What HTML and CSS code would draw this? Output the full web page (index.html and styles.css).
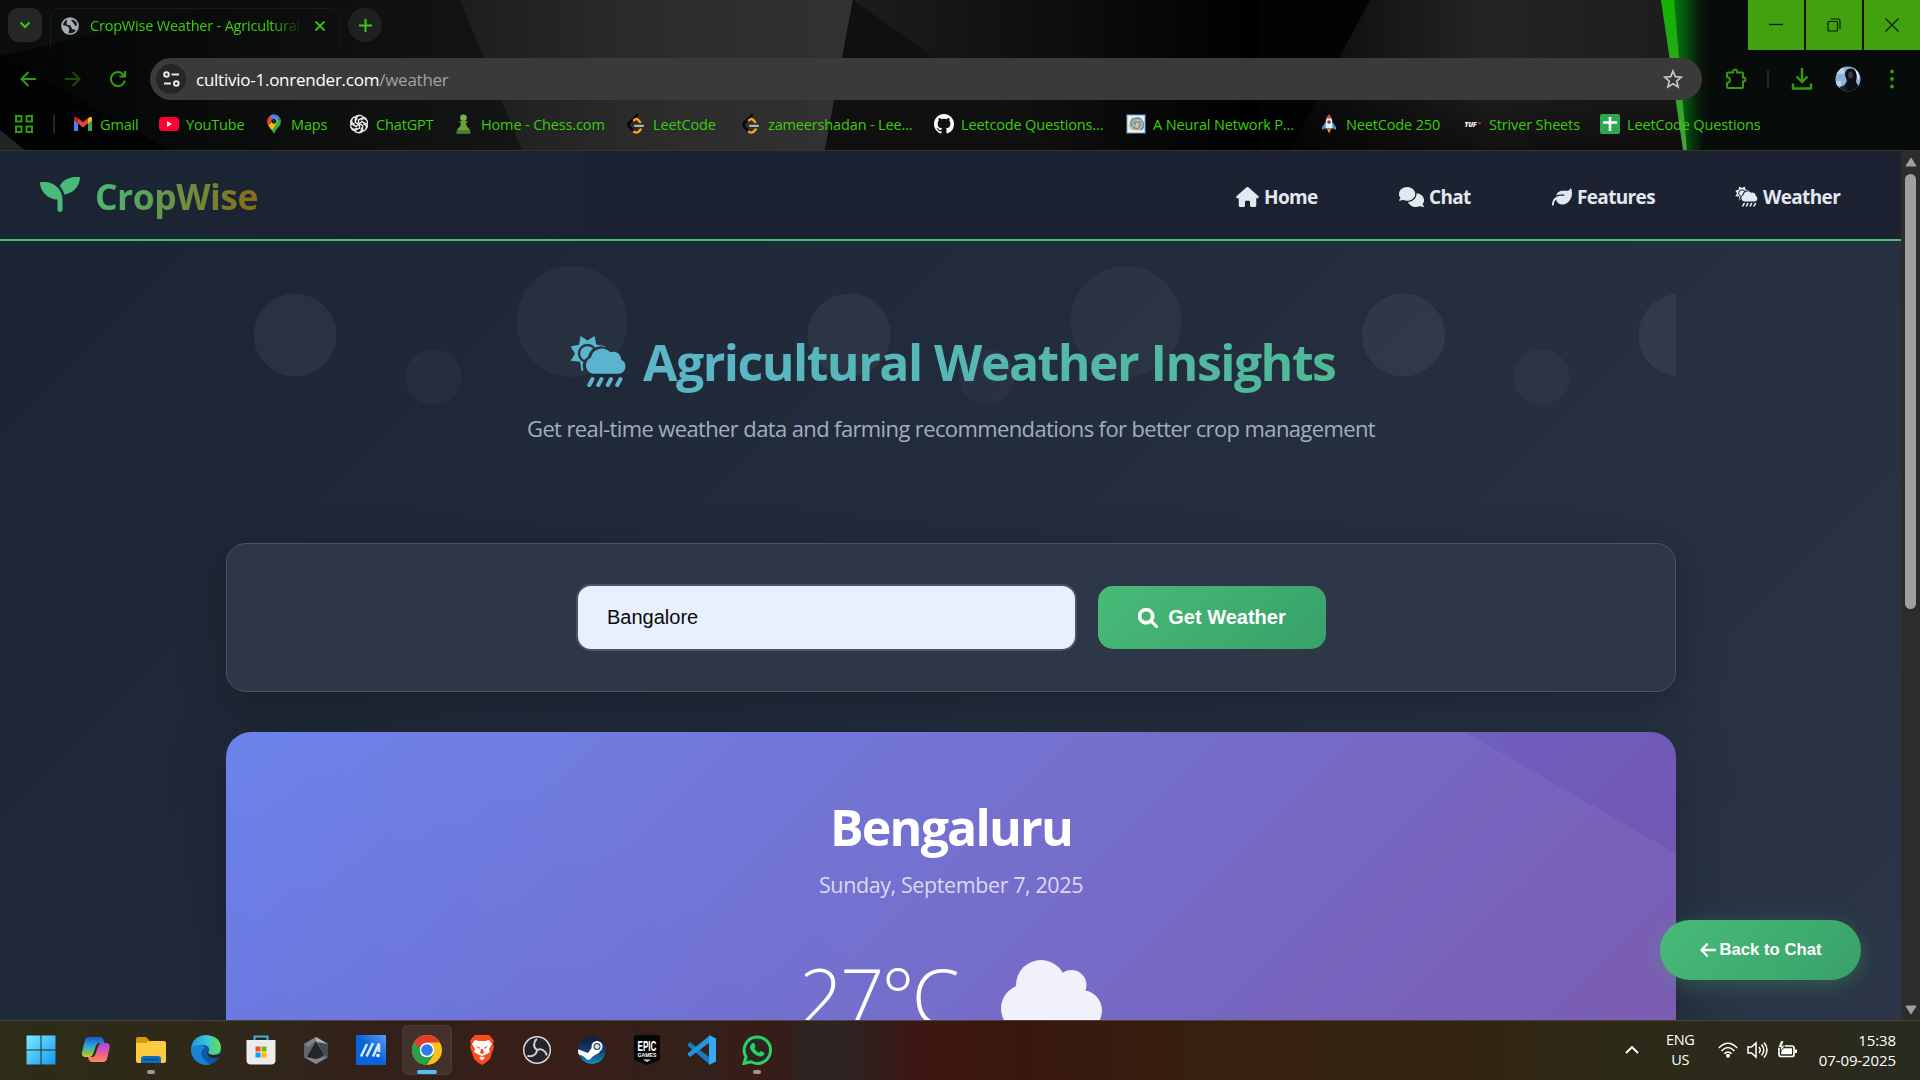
FILE: index.html
```html
<!DOCTYPE html>
<html lang="en">
<head>
<meta charset="utf-8">
<title>CropWise Weather</title>
<link rel="stylesheet" href="styles.css">
</head>
<body>
<svg class="defs" width="0" height="0">
  <defs>
    <mask id="sunCut" maskUnits="userSpaceOnUse" x="0" y="0" width="57" height="51">
      <rect width="57" height="51" fill="#fff"/>
      <circle cx="17.5" cy="17.5" r="8.500" fill="none" stroke="#000" stroke-width="2.400"/>
      <path d="M23 39.500a9.500 9.500 0 0 1-4-18a12 12 0 0 1 20-7a9 9 0 0 1 12 8l6 10v7z" fill="#000" stroke="#000" stroke-width="2"/>
    </mask>
    <symbol id="csr" viewBox="0 0 57 51">
      <path mask="url(#sunCut)" d="M10.500 0l7 4.500l7-4.500l1.800 8.500l9 1.800l-4.500 7.200l4.500 7.200l-9.300.800l-1 10l-7-5l-6.500 5l-1.400-9.700l-9.500-1l4.500-7.100l-4.500-7.200l8.500-1.800z"/>
      <path d="M24.500 37.800a8.500 8.500 0 0 1-3.500-16.300a11 11 0 0 1 19-5.200a8 8 0 0 1 11.200 7.500a7.400 7.400 0 0 1-2 14z"/>
      <path d="M22.500 43l-3.200 6M31.500 43l-3.200 6M41 43l-3.200 6M50.500 43l-3.200 6" stroke="currentColor" stroke-width="4" stroke-linecap="round"/>
    </symbol>
    <symbol id="leetcode" viewBox="0 0 20 20">
      <path d="M11 1L3 9.300q-1.200 1.500 0 3l3.500 4" fill="none" stroke="#050505" stroke-width="2.400" stroke-linecap="round"/>
      <path d="M8 6.300q2-2.300 4-.6l2 2.300M8 17.800q2.500 1.600 4.500 0l2.200-2.400" fill="none" stroke="#ffa116" stroke-width="2.400" stroke-linecap="round"/>
      <path d="M9 11.800h8" stroke="#b3b3b3" stroke-width="2.200" stroke-linecap="round"/>
    </symbol>
  </defs>
</svg>

<div class="screen">
  <header class="chrome">
    <svg class="wallpaper" viewBox="0 0 1920 150" preserveAspectRatio="none">
      <defs>
        <linearGradient id="g1" x1="0" x2="1"><stop offset="0" stop-color="#1c1d1d"/><stop offset=".45" stop-color="#2b2b2b"/><stop offset="1" stop-color="#323232"/></linearGradient>
        <linearGradient id="g2" x1="0" x2="1"><stop offset="0" stop-color="#1c1c1c"/><stop offset="1" stop-color="#000"/></linearGradient>
        <linearGradient id="g3" x1="0" x2="1"><stop offset="0" stop-color="#0a0a0a"/><stop offset=".5" stop-color="#242424"/><stop offset="1" stop-color="#1c1c1c"/></linearGradient>
        <linearGradient id="g4" x1="0" x2="1"><stop offset="0" stop-color="#067d0c"/><stop offset=".4" stop-color="#044a0c"/><stop offset="1" stop-color="#060b09" stop-opacity="0"/></linearGradient>
        <linearGradient id="g5" x1="0" x2="1"><stop offset="0" stop-color="#030404"/><stop offset="1" stop-color="#141616"/></linearGradient>
        <linearGradient id="g6" x1="0" y1="0" x2="0" y2="1"><stop offset="0" stop-color="#13b300"/><stop offset=".6" stop-color="#2fa424"/><stop offset="1" stop-color="#48a040"/></linearGradient>
        <linearGradient id="g7" x1="0" y1="0" x2="0" y2="1"><stop offset="0" stop-color="#000" stop-opacity="0"/><stop offset="1" stop-color="#000" stop-opacity=".55"/></linearGradient>
      </defs>
      <rect width="1920" height="150" fill="#020303"/>
      <path d="M245 0H470L530 150H170L0 55z" fill="url(#g5)"/>
      <path d="M0 0H245L0 56z" fill="#0c0e0e"/>
      <path d="M0 130L25 150H0z" fill="#222424"/>
      <path d="M460 0H853L825 150H522z" fill="url(#g1)"/>
      <path d="M853 0L825 150H1062z" fill="#101010"/>
      <path d="M853 0L1062 150H1260V0z" fill="url(#g2)"/>
      <path d="M1370 0H1665L1685 150H1290z" fill="url(#g3)"/>
      <path d="M1290 60H1685V150H1290z" fill="url(#g7)"/>
      <path d="M1670 0H1920V150H1690z" fill="#070b09"/>
      <path d="M1672 0H1708L1712 100L1700 150H1687z" fill="url(#g4)"/>
      <path d="M1661 0H1674L1687 150H1683z" fill="url(#g6)"/>
    </svg>

    <div class="tabrow">
      <span class="tabsearch"><svg width="12" height="8" viewBox="0 0 12 8"><path d="M1.500 1.500L6 6l4.500-4.500" fill="none" stroke="#3ecc0e" stroke-width="2"/></svg></span>
      <div class="tab">
        <svg width="18" height="20" viewBox="0 0 18 18"><circle cx="9" cy="9" r="8.800" fill="#a5adb6"/><path d="M6 2.500q-3.500 2-4 5.500l5 1.500l1.500 2.500l-1 4q5 1 7.500-3l-4-1-1.500-3.500l-4-1z M10 3l2 2.500l2.500 3.500l1.500-.5q0-4-4-5.700z" fill="#151818"/></svg>
        <span class="tabtitle">CropWise Weather - Agricultural</span>
        <svg width="10" height="10" viewBox="0 0 10 10"><path d="M.5.5l9 9M9.500.5l-9 9" stroke="#3ecc0e" stroke-width="1.800"/></svg>
      </div>
      <span class="newtab"><svg width="13" height="13" viewBox="0 0 13 13"><path d="M6.500 0v13M0 6.500h13" stroke="#3ecc0e" stroke-width="2"/></svg></span>
      <div class="wincontrols">
        <span><svg width="14" height="14"><path d="M0 6.500h14" stroke="#0c1c04" stroke-width="1.300"/></svg></span>
        <span><svg width="14" height="14" viewBox="0 0 14 14" fill="none" stroke="#0c1c04" stroke-width="1.200"><rect x="1" y="3.500" width="9.500" height="9.500" rx="1"/><path d="M3.500 1h7q2.500 0 2.500 2.500v7.500"/></svg></span>
        <span><svg width="14" height="14"><path d="M.5.5l13 13M13.500.5l-13 13" stroke="#0c1c04" stroke-width="1.200"/></svg></span>
      </div>
    </div>

    <div class="urlrow">
      <svg class="nav" width="16" height="16" viewBox="0 0 16 16" fill="none" stroke="#349a10" stroke-width="2"><path d="M16 8H1.500M8.500 1L1.500 8l7 7"/></svg>
      <svg class="nav" width="16" height="16" viewBox="0 0 16 16" fill="none" stroke="#1d4a10" stroke-width="2"><path d="M0 8h14.500M7.500 1l7 7l-7 7"/></svg>
      <svg class="nav" width="16" height="16" viewBox="0 0 16 16" fill="none" stroke="#349a10" stroke-width="2"><path d="M14.800 9.500A7 7 0 1 1 13 3.200l1.500 1.500M15 0v5.500H9.500"/></svg>
      <div class="omnibox">
        <span class="siteinfo"><svg width="17" height="16" viewBox="0 0 17 16" fill="none" stroke="#e8e8e8" stroke-width="2"><circle cx="3.500" cy="3.500" r="2.300"/><path d="M8.500 3.500H16M1 12.500h7"/><circle cx="13.300" cy="12.500" r="2.300"/></svg></span>
        <span class="url">cultivio-1.onrender.com<i>/weather</i></span>
        <svg class="star" width="20" height="20" viewBox="0 0 20 20"><path d="M10 2l2.300 5.600 6 .5-4.600 3.900 1.400 5.900-5.100-3.200-5.100 3.200 1.400-5.900L1.700 8.100l6-.5z" fill="none" stroke="#c4c4c4" stroke-width="1.700"/></svg>
      </div>
      <svg class="ext" width="22" height="22" viewBox="0 0 22 22"><path d="M3 4.500h5q-.3-3 2-3t2 3h5q1 0 1 1v4q2.500 0 2.500 2t-2.500 2v5q0 1.500-1 1.500H3q-1 0-1-1.500v-3.500q3-.5 3-3T2 9V5.500q0-1 1-1z" fill="none" stroke="#349a10" stroke-width="2"/></svg>
      <span class="sep"></span>
      <svg class="dl" width="22" height="22" viewBox="0 0 22 22"><path d="M11 0v13.500M5.500 8.500l5.500 5.500L16.500 8.500M2 15.500V20.500h18v-5" fill="none" stroke="#349a10" stroke-width="2.400"/></svg>
      <svg class="avatar" width="26" height="26" viewBox="0 0 26 26"><clipPath id="av"><circle cx="13" cy="13" r="12.500"/></clipPath><g clip-path="url(#av)"><rect width="26" height="26" fill="#8fb2d4"/><path d="M0 0h9v8H0zM0 15h6v5H0z" fill="#b9d2e8"/><path d="M12 26L9 20l3-5-2-6q0-6 5-6.500t7 5.500l-1 8 3 5v5z" fill="#0c0f16"/><path d="M20 3q5 5 4 12l-2-5z" fill="#e9eef2"/><path d="M3 26l2-5 5-2 3 7z" fill="#1a2230"/><ellipse cx="15.500" cy="9" rx="2.500" ry="3.500" fill="#3d3a42"/></g></svg>
      <svg class="dots" width="4" height="20" viewBox="0 0 4 20" fill="#349a10"><circle cx="2" cy="2.500" r="1.900"/><circle cx="2" cy="10" r="1.900"/><circle cx="2" cy="17.500" r="1.900"/></svg>
    </div>

    <div class="bookmarks">
      <svg class="apps" width="18" height="18" viewBox="0 0 18 18" fill="none" stroke="#349a10" stroke-width="2"><path d="M1 1h5.500v5.500H1zM11.500 1H17v5.500h-5.500zM1 11.500h5.500V17H1zM11.500 11.500H17V17h-5.500z"/></svg>
      <span class="sep"></span>
      <div class="marks">
        <span><svg viewBox="0 0 20 20"><path d="M1 4.500v12.500h4V9z" fill="#4285f4"/><path d="M19 4.500v12.500h-4V9z" fill="#34a853"/><path d="M1 6V5q0-3 2.500-1.800L5 4.300V9.500L1 6.500z" fill="#c5221f"/><path d="M5 4.300l5 3.900 5-3.900v5.200l-5 4-5-4z" fill="#ea4335"/><path d="M19 6V5q0-3-2.500-1.800L15 4.300V9.500l4-3z" fill="#fbbc04"/></svg><b>Gmail</b></span>
        <span><svg viewBox="0 0 20 20"><rect y="3" width="20" height="14" rx="3.500" fill="#ff0033"/><path d="M8 7v6l5-3z" fill="#fff"/></svg><b>YouTube</b></span>
        <span><svg viewBox="0 0 20 20"><path d="M10 .5A7 7 0 0 0 4.500 3.500L8 6.500z" fill="#1a73e8"/><path d="M4.700 3.200Q3 5 3 7.500q0 2 1.300 4L12.500 1q-1-.5-2.500-.5-3.500 0-5.300 2.700z" fill="#ea4335"/><path d="M6 1.800Q8 .5 10 .5q4 0 6 3.500L10 10 8 5z" fill="#4285f4"/><path d="M4.300 11.500q2.200 3 4 5.500L15 7 11 4z" fill="#fbbc04"/><path d="M16 4q1 1.500 1 3.500 0 3-3 6-2.700 3-3.500 5.500-.5 1-1 0L8 16.500z" fill="#34a853"/><circle cx="10" cy="7.300" r="2.500" fill="#10233f"/></svg><b>Maps</b></span>
        <span><svg viewBox="0 0 20 20" fill="none" stroke="#e8e8e8" stroke-width="1.400"><g id="petal"><path d="M7.500 6.500V3.800q1-2.600 3.800-2.400 2 .2 3 2L9.500 6v5"/><path d="M14.300 3.400q2.700.2 3.300 3"/></g><use href="#petal" transform="rotate(60 10 10)"/><use href="#petal" transform="rotate(120 10 10)"/><use href="#petal" transform="rotate(180 10 10)"/><use href="#petal" transform="rotate(240 10 10)"/><use href="#petal" transform="rotate(300 10 10)"/></svg><b>ChatGPT</b></span>
        <span><svg viewBox="0 0 20 20"><circle cx="9.500" cy="3.800" r="3.300" fill="#7fb43f"/><path d="M5.500 7.500q4-1.700 8 0v1.200h-1.700q.2 3.800 3.500 6.300 1.300 1.500 1 4.500H2.700q-.3-3 1-4.500Q7 12.500 7.200 8.700H5.500z" fill="#6aa338"/><path d="M3 16h13v3.500H2.700z" fill="#4c8132"/></svg><b>Home - Chess.com</b></span>
        <span><svg><use href="#leetcode"/></svg><b>LeetCode</b></span>
        <span><svg><use href="#leetcode"/></svg><b>zameershadan - Lee...</b></span>
        <span><svg viewBox="0 0 16 16" fill="#fff"><path d="M8 0C3.580 0 0 3.580 0 8c0 3.540 2.290 6.530 5.470 7.590.4.070.55-.17.55-.38 0-.19-.01-.82-.01-1.490-2.010.37-2.530-.49-2.690-.94-.09-.23-.48-.94-.82-1.130-.28-.15-.68-.52-.01-.53.63-.01 1.080.58 1.230.82.72 1.210 1.870.87 2.330.66.07-.52.28-.87.51-1.070-1.780-.2-3.640-.89-3.640-3.950 0-.87.31-1.590.82-2.150-.08-.2-.36-1.020.08-2.120 0 0 .67-.21 2.200.82.64-.18 1.320-.27 2-.27s1.360.09 2 .27c1.530-1.040 2.200-.82 2.200-.82.44 1.100.16 1.920.08 2.120.51.56.82 1.270.82 2.150 0 3.070-1.870 3.750-3.650 3.950.29.25.54.73.54 1.480 0 1.070-.01 1.930-.01 2.200 0 .21.15.46.55.38A8.010 8.010 0 0 0 16 8c0-4.420-3.580-8-8-8z"/></svg><b>Leetcode Questions...</b></span>
        <span><svg viewBox="0 0 20 20"><rect x=".5" y=".5" width="19" height="19" fill="#e8f1f8" stroke="#295873" stroke-width="1.500"/><path d="M10 10q1.500-2 2.500 0t-2.500 2.500T7 10t3.500-4.500T15.500 10 10 15.500 4 10t3-6.500" fill="none" stroke="#e9a04e" stroke-width="1.500"/><path d="M10 10q-1.500 1.500-1.500-.5t3-2 2.500 4-5 2.500-3.500-5.500T11 4t6 5-2.500 7" fill="none" stroke="#4a93cf" stroke-width="1.500"/></svg><b>A Neural Network P...</b></span>
        <span><svg viewBox="0 0 20 20"><path d="M6 9l-3 4v3l4-2zM14 9l3 4v3l-4-2z" fill="#3f8fd6"/><path d="M10 .5Q5.500 5 6.500 14.500h7Q14.500 5 10 .5z" fill="#e9edf2"/><path d="M10 .5Q8 2 7.300 4.500h5.400Q12 2 10 .5z" fill="#e0452c"/><circle cx="10" cy="8" r="1.800" fill="#35536e"/><path d="M8 15h4l-2 4.500z" fill="#ff8a1c"/></svg><b>NeetCode 250</b></span>
        <span><svg class="tuf" viewBox="0 0 20 20"><text x="2.500" y="12.500">TUF</text><path d="M16.500 8.500h2.200v1.600h-2.200z" fill="#d0522c"/></svg><b>Striver Sheets</b></span>
        <span><svg viewBox="0 0 20 20"><rect width="20" height="20" rx="2" fill="#2fa650"/><path d="M10 3v14M3 8.500h14" stroke="#fff" stroke-width="2.600"/></svg><b>LeetCode Questions</b></span>
      </div>
    </div>
  </header>

  <div class="viewport">
    <div class="page">
      <nav class="navbar">
        <div class="brand">
          <svg width="40" height="35" viewBox="0 32 512 448" fill="#48bb78"><path d="M64 96H0c0 123.700 100.300 224 224 224v128c0 17.700 14.300 32 32 32s32-14.300 32-32V320C288 196.300 187.700 96 64 96zm384-64c-84.200 0-157.400 46.300-195.600 115.200c27.700 30.200 48.200 66.900 59 107.600C424 243.100 512 147.900 512 32H448z"/></svg>
          <span>CropWise</span>
        </div>
        <div class="links">
          <a><svg width="23" height="20" viewBox="0 0 576 512"><path d="M575.800 255.500c0 18-15 32.100-32 32.100h-32l.7 160.200c0 2.700-.2 5.400-.5 8.100V472c0 22.100-17.900 40-40 40H456 392c-22.100 0-40-17.900-40-40V384c0-17.700-14.300-32-32-32H256c-17.700 0-32 14.300-32 32v88c0 22.100-17.900 40-40 40H104c-22.100 0-40-17.900-40-40V287.600H32c-18 0-32-14-32-32.100c0-9 3-17 10-24L266.400 8c7-7 15-8 22-8s15 2 21 7L564.800 231.500c8 7 12 15 11 24z"/></svg><span>Home</span></a>
          <a><svg width="25" height="20" viewBox="0 0 640 512"><path d="M208 352c114.900 0 208-78.800 208-176S322.900 0 208 0S0 78.800 0 176c0 38.600 14.700 74.300 39.600 103.400c-3.500 9.400-8.700 17.700-14.200 24.700c-4.800 6.200-9.700 11-13.300 14.300c-1.800 1.600-3.300 2.900-4.300 3.700C1 327.200-1.400 334.400.8 340.900S9.100 352 16 352c21.800 0 43.800-5.600 62.100-12.500c9.200-3.500 17.800-7.400 25.200-11.400C134.100 343.300 169.800 352 208 352zM448 176c0 112.300-99.100 196.900-216.500 207C255.800 457.400 336.400 512 432 512c38.200 0 73.900-8.700 104.700-23.900c7.500 4 16 7.900 25.200 11.400c18.300 6.900 40.300 12.500 62.100 12.500c6.900 0 13.100-4.500 15.200-11.100c2.100-6.600-.2-13.800-5.800-17.900c-1-.8-2.500-2-4.300-3.700c-3.600-3.300-8.500-8.100-13.300-14.300c-5.500-7-10.700-15.400-14.200-24.700c24.900-29 39.600-64.700 39.600-103.400c0-92.800-84.900-168.900-192.600-175.500c.4 5.100.6 10.300.6 15.500z"/></svg><span>Chat</span></a>
          <a><svg width="20" height="20" viewBox="0 0 512 512"><path d="M272 96c-78.600 0-145.100 51.500-167.700 122.500c33.600-17 71.500-26.500 111.700-26.500h88c8.800 0 16 7.200 16 16s-7.200 16-16 16H216c-16.600 0-32.700 1.900-48.200 5.400c-25.900 5.900-50 16.400-71.400 30.700C38.300 298.800 0 364.900 0 440v16c0 13.300 10.700 24 24 24s24-10.700 24-24V440c0-48.700 20.700-92.500 53.800-123.200C121.600 392.300 190.300 448 272 448h1c132.100-.7 239-130.900 239-291.400c0-42.600-7.500-83.100-21.100-119.600c-2.600-6.900-12.700-6.600-16.200-.1C455.900 72.100 418.700 96 376 96z"/></svg><span>Features</span></a>
          <a><svg width="23" height="21"><use href="#csr"/></svg><span>Weather</span></a>
        </div>
      </nav>

      <main class="content">
        <section class="hero">
          <svg class="bubbles" width="1450" height="200">
            <g fill="#fff"><circle cx="69" cy="94" r="41.500" fill-opacity=".055"/><circle cx="207.500" cy="136" r="28" fill-opacity=".03"/><circle cx="346" cy="80.500" r="55.500" fill-opacity=".04"/><circle cx="623" cy="94" r="41.500" fill-opacity=".055"/><circle cx="761" cy="136" r="28" fill-opacity=".03"/><circle cx="900" cy="80.500" r="55.500" fill-opacity=".04"/><circle cx="1177.500" cy="94" r="41.500" fill-opacity=".055"/><circle cx="1315.500" cy="136" r="28" fill-opacity=".03"/><circle cx="1454" cy="94" r="41.500" fill-opacity=".055"/></g>
          </svg>
          <h1><svg width="57" height="51"><use href="#csr"/></svg><span>Agricultural Weather Insights</span></h1>
          <p>Get real-time weather data and farming recommendations for better crop management</p>
        </section>

        <section class="search">
          <div class="field">Bangalore</div>
          <div class="button"><svg width="20" height="20" viewBox="0 0 512 512" fill="#fff"><path d="M416 208c0 45.900-14.900 88.300-40 122.700L502.600 457.400c12.500 12.500 12.500 32.800 0 45.300s-32.800 12.500-45.300 0L330.700 376c-34.400 25.200-76.800 40-122.700 40C93.100 416 0 322.900 0 208S93.100 0 208 0S416 93.100 416 208zM208 336a128 128 0 1 0 0-256 128 128 0 1 0 0 256z" stroke="#fff" stroke-width="14"/></svg><span>Get Weather</span></div>
        </section>

        <section class="card">
          <h2>Bengaluru</h2>
          <div class="date">Sunday, September 7, 2025</div>
          <div class="now">
            <span class="temp">27°C</span>
            <svg width="101" height="72" viewBox="0 0 101 72" fill="#f2f0fb"><circle cx="24" cy="48.500" r="24"/><circle cx="40" cy="25" r="25"/><circle cx="70.500" cy="25" r="15"/><circle cx="80.500" cy="50.500" r="20.500"/><path d="M24 30h56v42H24z"/></svg>
          </div>
        </section>
      </main>
      <a class="back"><svg width="16" height="14" viewBox="0 0 16 14"><path d="M15 7H1.800M7 1.300L1.500 7L7 12.700" fill="none" stroke="#fff" stroke-width="2.300" stroke-linecap="round" stroke-linejoin="round"/></svg><span>Back to Chat</span></a>
    </div>
    <div class="scrollbar">
      <svg width="12" height="10" viewBox="0 0 12 10"><path d="M6 1l5 8H1z" fill="#9f9f9f" stroke="#9f9f9f" stroke-linejoin="round"/></svg>
      <i></i>
      <svg class="down" width="12" height="10" viewBox="0 0 12 10"><path d="M6 9l5-8H1z" fill="#9f9f9f" stroke="#9f9f9f" stroke-linejoin="round"/></svg>
    </div>
  </div>

  <footer class="taskbar">
    <div class="pins">
      <span><svg viewBox="0 0 30 30"><defs><linearGradient id="w" x1="0" y1="0" x2="1" y2="1"><stop offset="0" stop-color="#7deaff"/><stop offset="1" stop-color="#1399f5"/></linearGradient></defs><path d="M.5.5h14v14H.5zM15.500.5h14v14h-14zM.5 15.500h14v14H.5zM15.500 15.500h14v14h-14z" fill="url(#w)"/></svg></span>
      <span><svg viewBox="0 0 30 30"><defs><linearGradient id="c1" x1="0" y1="0" x2="0" y2="1"><stop offset="0" stop-color="#1b56c8"/><stop offset=".45" stop-color="#29a9dd"/><stop offset=".8" stop-color="#7fc246"/><stop offset="1" stop-color="#ecc22b"/></linearGradient><linearGradient id="c2" x1="0" y1="0" x2="0" y2="1"><stop offset="0" stop-color="#a24bea"/><stop offset=".5" stop-color="#e9559e"/><stop offset="1" stop-color="#ff8b57"/></linearGradient></defs><path d="M7 2h12q2.500 0 3.500 3l.8 3h-5q-2.500 0-3.300 2.500L12 19q-1 3-4 3H4q-4-.5-3-5L4 5q1-3 3-3z" fill="url(#c1)"/><path d="M23 27H11q-2.500 0-3.500-3L7 22h4q2.500 0 3.500-3l3-8.500Q18.500 8 21 8h4.500q4 .5 3 5L26 24q-1 3-3 3z" fill="url(#c2)"/></svg></span>
      <span class="open"><svg viewBox="0 0 30 30"><path d="M0 4q0-2 2-2h8l3 3v6H0z" fill="#d8970a"/><path d="M0 8h10l3-2h15q2 0 2 2v18q0 2-2 2H2q-2 0-2-2z" fill="#fccb3f"/><path d="M5 28v-4q0-3 3-3h14q3 0 3 3v4z" fill="#0f6cbd"/><path d="M8 24.500h14" stroke="#0a4a8a" stroke-width="1.500"/></svg></span>
      <span><svg viewBox="0 0 30 30"><defs><linearGradient id="e" x1="0" x2="1"><stop offset="0" stop-color="#2196d8"/><stop offset=".5" stop-color="#36c4d8"/><stop offset="1" stop-color="#62df54"/></linearGradient></defs><circle cx="15" cy="15" r="15" fill="#0c59a4"/><path d="M0 14Q1 1 15 0q14 1 15 12 0 8-8 8-5 0-5-3 2-1 1-4-3-4-8-3-6 1-10 4z" fill="url(#e)"/><path d="M0 14q2-4 8-4 5 0 6 3-5 2-3 8 3 6 8 8.500Q15 31 9 28.500 0 24 0 14z" fill="#1b82d6"/><path d="M18 14q-4 5 1 8 4 2 9 0l3-1v-2l-8 1q-6 0-6-3z" fill="#2e2218"/></svg></span>
      <span><svg viewBox="0 0 30 30"><path d="M8.500 6V1.500h13V6" fill="none" stroke="#36b4e8" stroke-width="2"/><path d="M.5 5h29v20q0 4.500-4.500 4.500H5Q.5 29.500.5 25z" fill="#ececec"/><path d="M9.500 11.500h5v5h-5z" fill="#f25022"/><path d="M15.500 11.500h5v5h-5z" fill="#7fba00"/><path d="M9.500 17.500h5v5h-5z" fill="#00a4ef"/><path d="M15.500 17.500h5v5h-5z" fill="#ffb900"/></svg></span>
      <span><svg viewBox="0 0 30 30"><path d="M15 2l12 7v13l-12 7-12-7V9z" fill="#5f666d"/><path d="M15 2l12 7-8 4-4-7z" fill="#aeb5bb"/><path d="M15 2L3 9l4 3 8-6z" fill="#7c848b"/><path d="M15 6L6 22l9 3 8-5z" fill="#22272b"/><path d="M27 9v13l-4-2-7-13z" fill="#454b51"/><path d="M3 22l12 7 12-7-12 2z" fill="#83898e"/></svg></span>
      <span><svg viewBox="0 0 30 30"><defs><linearGradient id="m" x1="0" y1="1" x2="1" y2="0"><stop offset=".5" stop-color="#0864dd"/><stop offset="1" stop-color="#5b9cf0"/></linearGradient></defs><rect width="30" height="30" fill="url(#m)"/><path d="M5 21.500L11 9M10.500 21.500L17 8M17 21.500L23 8.500V17" fill="none" stroke="#d5e6fb" stroke-width="2.600"/><circle cx="22" cy="20.500" r="1.800" fill="#fff"/></svg></span>
      <span class="active"><svg viewBox="0 0 30 30"><circle cx="15" cy="15" r="15" fill="#fbc116"/><path d="M2 7.500A15 15 0 0 0 15 30l7-11-7-4z" fill="#2a9f48"/><path d="M2 7.500A15 15 0 0 1 28 7.500H15L8 13z" fill="#e33b2e"/><circle cx="15" cy="15" r="7.300" fill="#fff"/><circle cx="15" cy="15" r="5.800" fill="#2f7bee"/></svg></span>
      <span><svg viewBox="0 0 30 30"><path d="M8 0h14l3 3 2 3-1 3 1 3-4 12q-4 4-8 6-4-2-8-6L3 12l1-3-1-3 2-3z" fill="#fb4a1e"/><path d="M8 5l4 1h6l4-1 3 4-3 5 1 3-5 3-3 3-3-3-5-3 1-3-3-5z" fill="#fff"/><path d="M9 11l4 1.500-1 1.500zM21 11l-4 1.500 1 1.500zM14 14h2l1 4-2 1-2-1zM10 19l5 2 5-2-5 3.500z" fill="#fb4a1e"/><path d="M12 23l3-1.500 3 1.500-3 2.500z" fill="#fff"/></svg></span>
      <span><svg viewBox="0 0 30 30"><circle cx="15" cy="15" r="13.300" fill="#26242a" stroke="#d8d8d8" stroke-width="1.500"/><g id="obs"><path d="M15 15q-4-3-2.500-7.500Q13 5 15 4" fill="none" stroke="#d0d0d0" stroke-width="2"/></g><use href="#obs" transform="rotate(120 15 15)"/><use href="#obs" transform="rotate(240 15 15)"/></svg></span>
      <span><svg viewBox="0 0 30 30"><defs><linearGradient id="st" x1="0" y1="0" x2="0" y2="1"><stop offset="0" stop-color="#13183a"/><stop offset=".55" stop-color="#14406f"/><stop offset="1" stop-color="#148fc6"/></linearGradient><clipPath id="sc"><circle cx="15" cy="15" r="14"/></clipPath></defs><g clip-path="url(#sc)"><circle cx="15" cy="15" r="14" fill="url(#st)"/><path d="M0 14l11 4 5-7 7 6-8 5q-2 4-5 2.500L6 21 0 19z" fill="#fff"/><circle cx="20" cy="11.500" r="4.500" fill="#1a3157" stroke="#fff" stroke-width="2"/><circle cx="20" cy="11.500" r="2.500" fill="#d4dde8"/></g></svg></span>
      <span><svg class="epic" viewBox="0 0 30 30"><path d="M2 2q0-2 2-2h22q2 0 2 2v23l-13 5-13-5z" fill="#060606"/><text x="15" y="15.500" textLength="19" lengthAdjust="spacingAndGlyphs">EPIC</text><text class="sm" x="15" y="22" textLength="19" lengthAdjust="spacingAndGlyphs">GAMES</text><path d="M11 24.500h8l-4 2.500z" fill="#ddd"/></svg></span>
      <span><svg viewBox="0 0 30 30"><path d="M1 9l2-2 19 15v7L1 11z" fill="#1b79c4"/><path d="M1 20l2 2L22 8V1L1 18z" fill="#2393dd"/><path d="M22 0l7 3.500v23L22 30V0z" fill="#34a9f0"/></svg></span>
      <span class="open"><svg viewBox="0 0 30 30"><path d="M2 28.500L4 22A13.200 13.200 0 1 1 9 26.800z" fill="#2c2622" stroke="#27d366" stroke-width="3"/><path d="M10 8.500q1.500-1.500 2.500.5l1 2.500-1.200 1.800q1.700 3.200 4.700 4.500l1.800-1.800 3 1.500q1 .500.200 2-1.500 2.500-4.500 2-7-2-9.500-8.500-.5-2.500 2-4.500z" fill="#27d366"/></svg></span>
    </div>
    <div class="tray">
      <svg class="chev" width="14" height="8" viewBox="0 0 14 8"><path d="M1 7l6-6 6 6" fill="none" stroke="#fff" stroke-width="1.900"/></svg>
      <div class="lang">ENG<br>US</div>
      <svg class="wifi" width="20" height="16" viewBox="0 0 20 16" fill="none" stroke="#fff" stroke-width="1.500"><path d="M.8 6q9.200-9.500 18.400 0M3.500 9q6.500-6.800 13 0M6.300 11.800q3.700-3.700 7.400 0"/><circle cx="10" cy="13.800" r="1.200" fill="#fff"/></svg>
      <svg class="vol" width="21" height="18" viewBox="0 0 21 18" fill="none" stroke="#fff" stroke-width="1.500"><path d="M1 6h3.500L9 2v14l-4.500-4H1zM12 6q2.500 3 0 6M14.500 3.500q4.500 5.500 0 11M17 1.500q6 7.500 0 15"/></svg>
      <svg class="bat" width="21" height="18" viewBox="0 0 21 18"><rect x="2" y="5" width="15" height="10.500" rx="2" fill="none" stroke="#fff" stroke-width="1.700"/><path d="M5 7.300h10v6H4z" fill="#fff"/><path d="M18 8.500h2v3.500h-2z" fill="#fff"/><path d="M4-.5L1 6.500h3L3 11l5-6H5l2-5z" fill="#fff" stroke="#2c2a19" stroke-width=".8"/></svg>
      <div class="clock">15:38<br>07-09-2025</div>
    </div>
  </footer>
</div>
</body>
</html>
```
FILE: styles.css
```css
* { box-sizing: border-box; }
body { margin: 0; font-family: "Open Sans", "Noto Sans", sans-serif; background: #000; overflow: hidden; }
svg { display: block; flex: none; }
.defs { position: absolute; }
.screen { width: 1920px; height: 1080px; display: flex; flex-direction: column; overflow: hidden; }

/* browser frame */
.chrome { position: relative; height: 151px; border-bottom: 1px solid #2b3a1c; display: flex; flex-direction: column; }
.wallpaper { position: absolute; inset: 0; width: 1920px; height: 150px; }
.tabrow, .urlrow, .bookmarks { position: relative; display: flex; align-items: center; }
.tabrow { height: 58px; align-items: flex-start; padding-left: 8px; }
.tabsearch, .newtab { display: flex; align-items: center; justify-content: center; height: 34px; width: 34px; margin-top: 8px; background: #262727; border-radius: 11px; }
.newtab { border-radius: 50%; background: #1f2020; margin-left: 8px; }
.tab { display: flex; align-items: center; width: 290px; height: 42px; margin: 8px 0 0 8px; padding: 0 14px 8px 10px; border: 1px solid #17191a; border-bottom: 0; border-radius: 11px 11px 0 0; }
.tabtitle { width: 213px; margin: 0 15px 0 11px; overflow: hidden; white-space: nowrap; color: #3ecc0e; font-size: 14.500px; letter-spacing: -.2px; line-height: 22px; -webkit-mask-image: linear-gradient(90deg, #000 182px, transparent 213px); mask-image: linear-gradient(90deg, #000 182px, transparent 213px); }
.wincontrols { display: flex; gap: 2px; margin-left: auto; }
.wincontrols span { display: flex; align-items: center; justify-content: center; width: 56px; height: 50px; background: #41a10f; }
.urlrow { height: 42px; padding-left: 20px; }
.nav { margin-right: 29px; }
.omnibox { display: flex; align-items: center; width: 1552px; height: 42px; margin-left: -5px; padding: 0 19px 0 6px; border-radius: 21px; background: #3a3a3a; }
.siteinfo { display: flex; align-items: center; justify-content: center; width: 30px; height: 30px; border-radius: 50%; background: #262626; }
.url { margin-left: 10px; color: #fff; font-size: 17px; letter-spacing: -.25px; }
.url i { font-style: normal; color: #a2a2a2; }
.star { margin-left: auto; }
.ext { margin-left: 23px; }
.sep { width: 2px; height: 18px; background: #23272a; }
.urlrow .sep { margin: 0 22px 0 20px; }
.avatar { margin-left: 22px; }
.dots { margin-left: 29px; }
.bookmarks { height: 50px; padding: 0 0 2px 15px; }
.bookmarks .sep { margin: 0 18px 0 20px; }
.marks { display: grid; grid-template-columns: 86px 105px 85px 105px 172px 115px 193px 192px 193px 143px 138px 180px; }
.marks span { display: flex; align-items: center; gap: 7px; white-space: nowrap; }
.marks svg { width: 20px; height: 20px; }
.marks b { font-weight: 400; font-size: 14.500px; letter-spacing: -.15px; color: #3ecc0e; }
.tuf text { font: italic 800 7px "Open Sans", sans-serif; fill: #f4f4f4; letter-spacing: -.2px; }

/* web page */
.viewport { display: flex; height: 869px; overflow: hidden; }
.page { position: relative; width: 1901px; height: 869px; overflow: hidden; background: linear-gradient(135deg, #1b2432, #2b3547); }
.navbar { display: flex; align-items: center; justify-content: space-between; height: 90px; padding: 3px 0 0 40px; border-bottom: 2px solid #48bb78; background: linear-gradient(90deg, #1b2533, #1c2232 35%, #1d2232); }
.brand { display: flex; align-items: center; gap: 15px; }
.brand svg { margin-top: -5px; }
.brand span { margin-top: -2px; font-size: 35.500px; font-weight: 700; letter-spacing: -.5px; line-height: 60px; background: linear-gradient(100deg, #48bb78, #8b6914); -webkit-background-clip: text; background-clip: text; color: transparent; }
.links { display: grid; grid-template-columns: 163px 153px 183px 166px; }
.links a { display: flex; align-items: center; gap: 5px; color: #e2e8f0; fill: #e2e8f0; font-size: 19px; font-weight: 700; letter-spacing: -.65px; }
.content { width: 1450px; margin: 0 auto 0 226px; }
.hero { position: relative; height: 302px; padding-top: 86px; text-align: center; }
.bubbles { position: absolute; left: 0; top: 0; }
h1 { position: relative; display: flex; align-items: center; gap: 16px; height: 70px; margin: 0; padding-left: 344px; color: #5bb4cf; fill: #5bb4cf; font-size: 50px; font-weight: 700; letter-spacing: -1.550px; word-spacing: 1px; background: linear-gradient(135deg, #63b3ed, #48bb78); -webkit-background-clip: text; background-clip: text; }
h1 svg { margin-top: -2px; }
h1 span { color: transparent; white-space: nowrap; }
.hero p { position: relative; margin: 15px 0 0; color: #a0aec0; font-size: 22px; line-height: 32px; letter-spacing: -.62px; }
.search { display: flex; justify-content: center; gap: 21px; height: 149px; padding-top: 40px; border: 1px solid #4a5568; border-radius: 20px; background: #2e3748; box-shadow: 0 10px 38px rgba(20, 28, 36, .6); font-family: "Liberation Sans", Arial, sans-serif; font-size: 20px; }
.field { width: 501px; height: 67px; padding-left: 29px; border: 2px solid #4a5568; border-radius: 15px; background: #e8f0fe; line-height: 63px; color: #0b0b0b; }
.button { display: flex; align-items: center; justify-content: center; gap: 10px; width: 228px; height: 63px; margin-top: 2px; border-radius: 15px; background: linear-gradient(135deg, #48bb78, #38a169); color: #fff; font-weight: 700; }
.card { height: 600px; margin-top: 40px; padding-top: 57px; border-radius: 25px; text-align: center; color: #fff; background: linear-gradient(210deg, transparent 105px, rgba(255, 255, 255, .05) 106px, rgba(255, 255, 255, .05) 600px, rgba(255, 255, 255, .02) 1000px), linear-gradient(135deg, #667eea, #764ba2); box-shadow: 0 15px 50px rgba(18, 28, 36, .55); }
.card h2 { margin: 0; font-size: 50px; font-weight: 700; line-height: 76px; letter-spacing: -1.800px; }
.date { margin-top: 2px; color: #dcd9f2; font-size: 21.500px; line-height: 36px; letter-spacing: -.4px; }
.now { display: flex; gap: 44px; padding: 43px 0 0 573px; }
.temp { margin-top: -5px; font-size: 77px; font-weight: 300; line-height: 110px; letter-spacing: -2.700px; }
.now svg { margin-top: 14px; }
.back { position: absolute; left: 1660px; top: 769px; width: 201px; height: 60px; display: flex; align-items: center; justify-content: center; gap: 4px; border-radius: 30px; background: linear-gradient(135deg, #48bb78, #38a169); box-shadow: 0 5px 22px rgba(72, 187, 120, .3); color: #fff; font: 700 16.700px "Liberation Sans", Arial, sans-serif; }
.scrollbar { width: 19px; display: flex; flex-direction: column; align-items: center; padding: 6px 0 5px; background: #2c2c2c; }
.scrollbar i { width: 11px; height: 435px; margin-top: 7px; border-radius: 6px; background: #9f9f9f; }
.scrollbar .down { margin-top: auto; }

/* taskbar */
.taskbar { display: flex; justify-content: space-between; height: 60px; border-top: 1px solid #4a4638; background: linear-gradient(90deg, #2c2c18, #30281a 12%, #33201a 20%, #371f17 28%, #33201a 37%, #3a1b18 40%, #2c2322 42%, #2d2321 44%, #3e1612 48%, #38170f 54%, #37200f 62%, #34240f 75%, #2c2a18 85%, #2a2a1f); }
.pins { display: flex; padding: 4px 0 0 16px; gap: 5.080px; }
.pins span { position: relative; display: flex; justify-content: center; width: 50px; height: 50px; padding-top: 10px; border-radius: 6px; }
.pins svg { width: 30px; height: 30px; }
.pins .active { background: rgba(255, 255, 255, .08); box-shadow: inset 0 0 0 1px rgba(255, 255, 255, .05); }
.pins .open::after, .pins .active::after { content: ""; position: absolute; bottom: 1px; left: 21px; width: 8px; height: 4px; border-radius: 2px; background: #9d9894; }
.pins .active::after { left: 15px; width: 20px; background: #4cc2ff; }
.epic { overflow: visible; }
.epic text { font: 700 14px "Liberation Sans", sans-serif; fill: #fff; text-anchor: middle; }
.epic .sm { font-size: 5.500px; }
.tray { display: flex; align-items: center; color: #fff; font-size: 14.500px; line-height: 20px; letter-spacing: -.3px; padding: 0 24px 2px 0; }
.chev { margin-right: 26px; }
.lang { width: 31px; text-align: center; }
.wifi { margin: 0 9px 0 22px; }
.vol { margin-right: 9px; }
.clock { margin-left: 21px; text-align: right; font-size: 15px; letter-spacing: -.1px; }
```
